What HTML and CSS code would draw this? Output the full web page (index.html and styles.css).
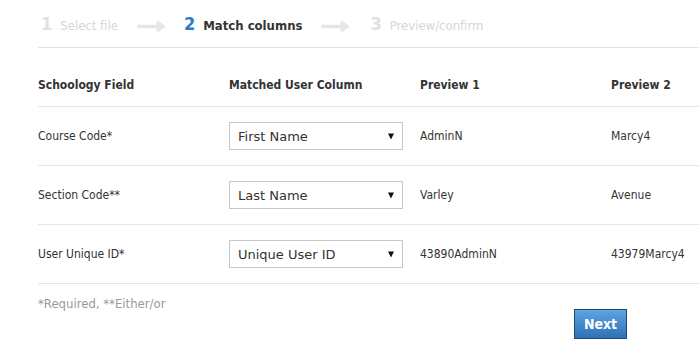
FILE: index.html
```html
<!DOCTYPE html>
<html>
<head>
<meta charset="utf-8">
<link rel="stylesheet" href="styles.css">
</head>
<body>
<div class="page">
  <div class="steps">
    <div class="step done"><span class="num">1</span><span class="label">Select file</span></div>
    <svg class="arrow" width="28" height="11" viewBox="0 0 28 11"><path d="M0 5.5H25M20 1.2L26 5.5L20 9.8" fill="none" stroke="#e6e6e6" stroke-width="3.5"/></svg>
    <div class="step active"><span class="num">2</span><span class="label">Match columns</span></div>
    <svg class="arrow" width="28" height="11" viewBox="0 0 28 11"><path d="M0 5.5H25M20 1.2L26 5.5L20 9.8" fill="none" stroke="#e6e6e6" stroke-width="3.5"/></svg>
    <div class="step"><span class="num">3</span><span class="label">Preview/confirm</span></div>
  </div>

  <div class="grid">
    <div class="row head">
      <div class="cell">Schoology Field</div>
      <div class="cell">Matched User Column</div>
      <div class="cell">Preview 1</div>
      <div class="cell">Preview 2</div>
    </div>
    <div class="row">
      <div class="cell">Course Code*</div>
      <div class="cell"><div class="select"><span>First Name</span><svg width="6" height="7" viewBox="0 0 6 7"><path d="M0 0.5H6L3 6.5Z" fill="#111"/></svg></div></div>
      <div class="cell">AdminN</div>
      <div class="cell">Marcy4</div>
    </div>
    <div class="row">
      <div class="cell">Section Code**</div>
      <div class="cell"><div class="select"><span>Last Name</span><svg width="6" height="7" viewBox="0 0 6 7"><path d="M0 0.5H6L3 6.5Z" fill="#111"/></svg></div></div>
      <div class="cell">Varley</div>
      <div class="cell">Avenue</div>
    </div>
    <div class="row">
      <div class="cell">User Unique ID*</div>
      <div class="cell"><div class="select"><span>Unique User ID</span><svg width="6" height="7" viewBox="0 0 6 7"><path d="M0 0.5H6L3 6.5Z" fill="#111"/></svg></div></div>
      <div class="cell">43890AdminN</div>
      <div class="cell">43979Marcy4</div>
    </div>
  </div>

  <div class="footer">
    <div class="note">*Required, **Either/or</div>
    <div class="actions"><button class="next">Next</button></div>
  </div>
</div>
</body>
</html>
```

FILE: styles.css
```css
html, body {
  margin: 0;
  padding: 0;
  background: #fff;
  overflow: hidden;
}
body {
  font-family: "DejaVu Sans Condensed", "DejaVu Sans", sans-serif;
  color: #333;
}
.page {
  margin-left: 38px;
  width: 800px;
}
.steps {
  display: flex;
  align-items: center;
  height: 47px;
  border-bottom: 1px solid #e3e3e3;
  padding-left: 3px;
}
.step {
  display: flex;
  align-items: baseline;
  gap: 8px;
}
.step .num {
  font-size: 18px;
  font-weight: bold;
  color: #e0e0e0;
}
.step .label {
  font-size: 13px;
  color: #d6d6d6;
}
.step.active .num {
  color: #2f7bc7;
}
.step.active .label {
  color: #333;
  font-weight: bold;
}
.arrow {
  margin: 6px 19px 0 19px;
}
.arrow:nth-of-type(2) {
  margin-right: 21px;
}
.grid {
  margin-top: 16px;
}
.row {
  display: grid;
  grid-template-columns: 191px 191px 191px 191px;
  align-items: center;
  border-bottom: 1px solid #e6e6e6;
  height: 58px;
  font-size: 12px;
}
.row.head {
  height: 42px;
  font-size: 12px;
  font-weight: bold;
  color: #333;
}
.select {
  box-sizing: border-box;
  width: 174px;
  height: 28px;
  border: 1px solid #c8c8c8;
  display: flex;
  align-items: center;
  justify-content: space-between;
  padding: 0 8px 0 8px;
  font-family: "DejaVu Sans", sans-serif;
  font-size: 13px;
  color: #333;
}
.footer {
  width: 661px;
}
.note {
  font-size: 13px;
  color: #9a9a9a;
  margin-top: 12px;
}
.actions {
  display: flex;
  justify-content: flex-end;
  padding-right: 72px;
  margin-top: -2px;
}
.next {
  width: 53px;
  height: 30px;
  border: 1px solid #1d4a6e;
  background: linear-gradient(#5ea3e2, #2e71b6);
  color: #fff;
  font-family: "DejaVu Sans Condensed", "DejaVu Sans", sans-serif;
  font-weight: bold;
  font-size: 14px;
  padding: 0;
}
```
